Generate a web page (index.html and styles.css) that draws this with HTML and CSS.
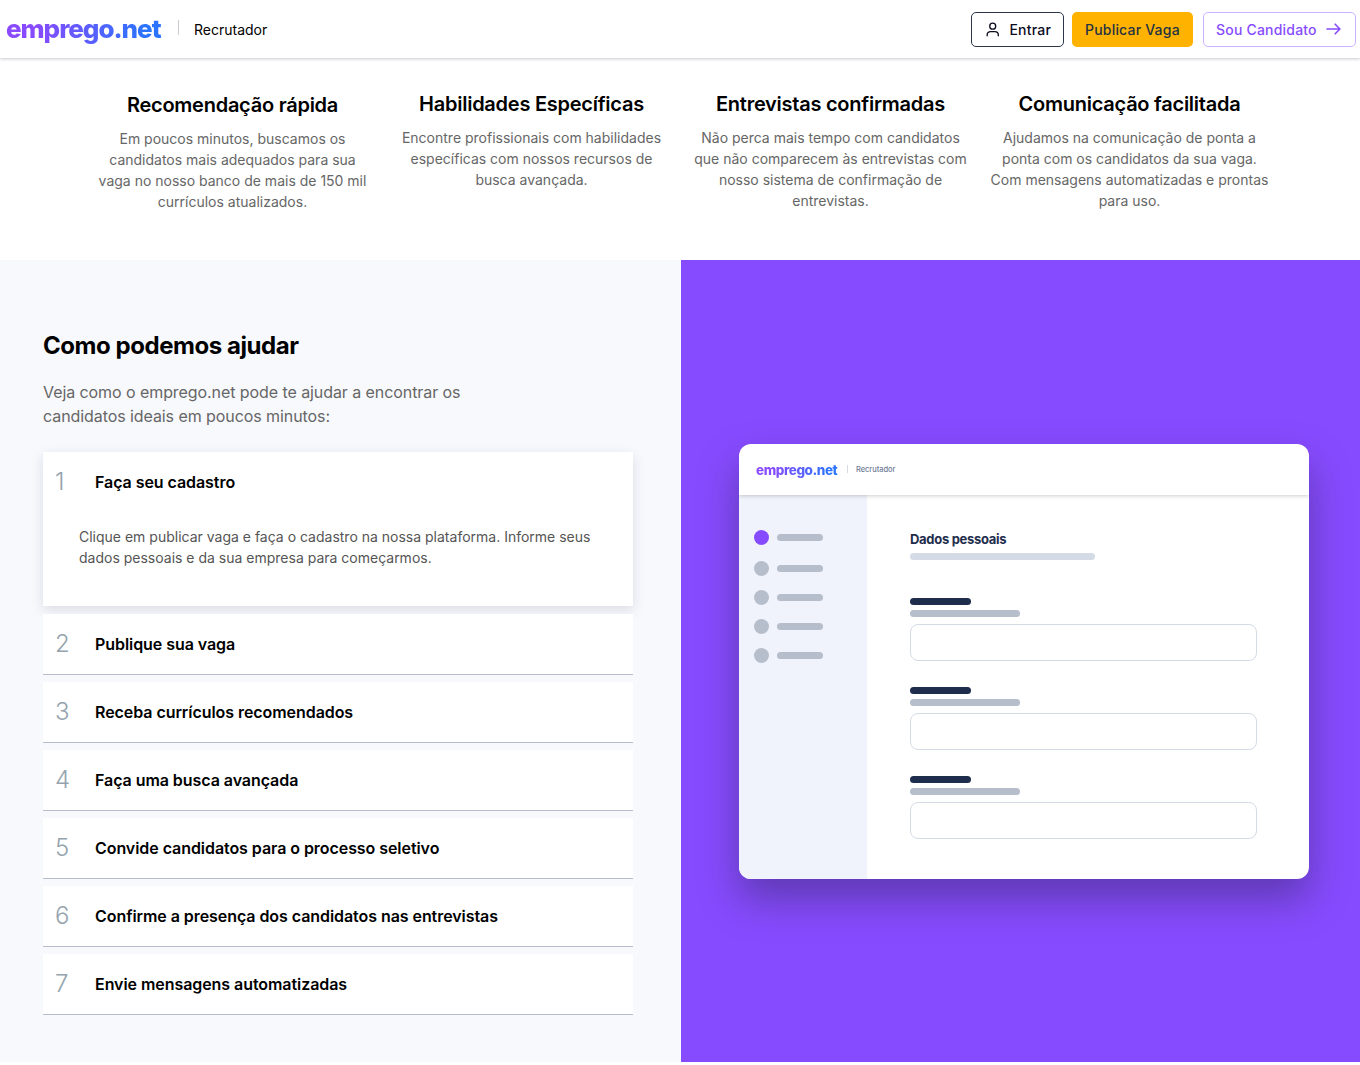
FILE: index.html
```html
<!DOCTYPE html>
<html lang="pt-BR">
<head>
    <meta charset="UTF-8">
    <meta name="viewport" content="width=device-width, initial-scale=1.0">
    <title>emprego.net | Recrutador</title>
    <link rel="stylesheet" href="styles.css">
</head>
<body>
    <header class="header">
        <div class="brand">
            <a class="logo">emprego.net</a>
            <span class="brand-divider"></span>
            <span class="brand-area">Recrutador</span>
        </div>
        <nav class="actions">
            <a class="btn btn-login">
                <svg class="icon-user" width="14" height="16" viewBox="0 0 14 16" fill="none" stroke="currentColor" stroke-width="1.4" stroke-linecap="round">
                    <circle cx="7" cy="4" r="3.1"/>
                    <path d="M1.2 14v-.7c0-2.3 1.5-3.6 3.6-3.6h4.4c2.1 0 3.6 1.3 3.6 3.6v.7"/>
                </svg>
                Entrar
            </a>
            <a class="btn btn-publish">Publicar Vaga</a>
            <a class="btn btn-candidate">
                Sou Candidato
                <svg class="icon-arrow" width="15" height="12" viewBox="0 0 15 12" fill="none" stroke="currentColor" stroke-width="1.6" stroke-linecap="round" stroke-linejoin="round">
                    <path d="M1 6h12.8M9.2 1.2L13.9 6l-4.7 4.8"/>
                </svg>
            </a>
        </nav>
    </header>

    <section class="features">
        <div class="feature feature-first">
            <h3>Recomendação rápida</h3>
            <p>Em poucos minutos, buscamos os candidatos mais adequados para sua vaga no nosso banco de mais de 150 mil currículos atualizados.</p>
        </div>
        <div class="feature">
            <h3>Habilidades Específicas</h3>
            <p>Encontre profissionais com habilidades específicas com nossos recursos de busca avançada.</p>
        </div>
        <div class="feature">
            <h3>Entrevistas confirmadas</h3>
            <p>Não perca mais tempo com candidatos que não comparecem às entrevistas com nosso sistema de confirmação de entrevistas.</p>
        </div>
        <div class="feature">
            <h3>Comunicação facilitada</h3>
            <p>Ajudamos na comunicação de ponta a ponta com os candidatos da sua vaga. Com mensagens automatizadas e prontas para uso.</p>
        </div>
    </section>

    <section class="help">
        <div class="help-left">
            <h2>Como podemos ajudar</h2>
            <p class="help-intro">Veja como o emprego.net pode te ajudar a encontrar os candidatos ideais em poucos minutos:</p>

            <div class="step step-open">
                <div class="step-head"><span class="step-number">1</span><h4>Faça seu cadastro</h4></div>
                <p class="step-text">Clique em publicar vaga e faça o cadastro na nossa plataforma. Informe seus dados pessoais e da sua empresa para começarmos.</p>
            </div>
            <div class="step">
                <div class="step-head"><span class="step-number">2</span><h4>Publique sua vaga</h4></div>
            </div>
            <div class="step">
                <div class="step-head"><span class="step-number">3</span><h4>Receba currículos recomendados</h4></div>
            </div>
            <div class="step">
                <div class="step-head"><span class="step-number">4</span><h4>Faça uma busca avançada</h4></div>
            </div>
            <div class="step">
                <div class="step-head"><span class="step-number">5</span><h4>Convide candidatos para o processo seletivo</h4></div>
            </div>
            <div class="step">
                <div class="step-head"><span class="step-number">6</span><h4>Confirme a presença dos candidatos nas entrevistas</h4></div>
            </div>
            <div class="step">
                <div class="step-head"><span class="step-number">7</span><h4>Envie mensagens automatizadas</h4></div>
            </div>
        </div>

        <div class="help-right">
            <div class="mock">
                <div class="mock-header">
                    <span class="logo logo-small">emprego.net</span>
                    <span class="mock-divider"></span>
                    <span class="mock-area">Recrutador</span>
                </div>
                <div class="mock-body">
                    <div class="mock-sidebar">
                        <div class="mock-link active"><i class="dot"></i><i class="bar"></i></div>
                        <div class="mock-link"><i class="dot"></i><i class="bar"></i></div>
                        <div class="mock-link"><i class="dot"></i><i class="bar"></i></div>
                        <div class="mock-link"><i class="dot"></i><i class="bar"></i></div>
                        <div class="mock-link"><i class="dot"></i><i class="bar"></i></div>
                    </div>
                    <div class="mock-form">
                        <div class="mock-title">Dados pessoais</div>
                        <div class="bar bar-subtitle"></div>
                        <div class="mock-field">
                            <div class="bar bar-label"></div>
                            <div class="bar bar-hint"></div>
                            <div class="mock-input"></div>
                        </div>
                        <div class="mock-field">
                            <div class="bar bar-label"></div>
                            <div class="bar bar-hint"></div>
                            <div class="mock-input"></div>
                        </div>
                        <div class="mock-field">
                            <div class="bar bar-label"></div>
                            <div class="bar bar-hint"></div>
                            <div class="mock-input"></div>
                        </div>
                    </div>
                </div>
            </div>
        </div>
    </section>
</body>
</html>
```
FILE: styles.css
```css
* {
    box-sizing: border-box;
}
body {
    font-family: Inter, Arial, sans-serif;
    margin: 0;
    padding: 0;
    background-color: #fff;
    color: #000;
}
h2, h3, h4, p {
    margin: 0;
}

/* Header */
.header {
    display: flex;
    justify-content: space-between;
    height: 58px;
    padding: 0 4px 0 6px;
    box-shadow: 0 1px 3px rgba(30, 30, 70, 0.25);
}
.brand {
    display: flex;
    align-items: center;
}
.logo {
    width: 156px;
    font-size: 26px;
    font-weight: 800;
    line-height: 32px;
    letter-spacing: -1.05px;
    color: transparent;
    background: linear-gradient(90deg, #8c4aff 0%, #864bff 20%, #2a74ff 90%);
    -webkit-background-clip: text;
    background-clip: text;
}
.brand-divider {
    width: 1px;
    height: 15px;
    margin: 0 15px 3px 16px;
    background-color: #c9ccd3;
}
.brand-area {
    font-size: 14px;
}
.actions {
    display: flex;
    padding-top: 12px;
}
.btn {
    display: flex;
    align-items: center;
    height: 35px;
    padding: 0 12px;
    border: 1px solid transparent;
    border-radius: 5px;
    font-size: 14px;
    font-weight: 500;
    letter-spacing: 0.2px;
}
.btn-login {
    width: 93px;
    padding-left: 14px;
    margin-right: 8px;
    border-color: #2b3648;
    color: #0b0b1e;
}
.icon-user {
    margin-right: 10px;
}
.btn-publish {
    width: 121px;
    margin-right: 10px;
    background-color: #ffb200;
    color: #253244;
}
.btn-candidate {
    width: 153px;
    border-color: #cdb3ff;
    color: #874bff;
}
.icon-arrow {
    margin: -2px 0 0 9px;
}

/* Features */
.features {
    display: grid;
    grid-template-columns: repeat(4, 299px);
    height: 202px;
    padding: 34px 0 0 83px;
}
.feature {
    padding: 0 9px;
    text-align: center;
}
.feature-first {
    padding-top: 1px;
}
.feature h3 {
    margin-bottom: 11px;
    font-size: 20px;
    font-weight: 600;
    line-height: 24px;
    letter-spacing: -0.25px;
}
.feature p {
    font-size: 14px;
    line-height: 21px;
    color: #666;
}

/* Help */
.help {
    display: flex;
    height: 802px;
}
.help-left {
    width: 681px;
    padding: 71px 48px 0 43px;
    background-color: #f8f9fd;
}
.help-left h2 {
    font-size: 24px;
    font-weight: 700;
    line-height: 30px;
    letter-spacing: -0.45px;
}
.help-intro {
    width: 440px;
    margin: 19px 0 24px;
    font-size: 16px;
    line-height: 24px;
    letter-spacing: -0.075px;
    color: #666;
}
.step {
    height: 61px;
    margin-bottom: 7px;
    background-color: #fff;
    border-bottom: 1px solid #b6becd;
}
.step-open {
    height: 154px;
    margin-bottom: 8px;
    border-bottom: none;
    box-shadow: 0 4px 12px rgba(30, 30, 60, 0.13);
}
.step:not(.step-open) {
    position: relative;
}
.step-head {
    display: flex;
    align-items: center;
    height: 60px;
    padding-left: 12px;
}
.step-number {
    width: 40px;
    padding-bottom: 2px;
    font-size: 24px;
    font-weight: 300;
    color: #94a3ad;
}
.step h4 {
    font-size: 16px;
    font-weight: 600;
    letter-spacing: -0.06px;
}
.step-text {
    padding: 14px 36px 0;
    font-size: 14px;
    line-height: 21px;
    color: #555;
}
.help-right {
    display: flex;
    flex: 1;
    padding: 184px 0 0 58px;
    background-color: #874bff;
}

/* Form preview */
.mock {
    width: 570px;
    height: 435px;
    border-radius: 12px;
    background-color: #fff;
    overflow: hidden;
    box-shadow: 0 20px 40px rgba(30, 30, 50, 0.38);
}
.mock-header {
    position: relative;
    display: flex;
    align-items: center;
    height: 51px;
    padding-left: 17px;
    box-shadow: 0 1px 4px rgba(0, 0, 0, 0.2);
}
.logo-small {
    width: 83px;
    font-size: 13.5px;
    line-height: 18px;
    letter-spacing: -0.45px;
}
.mock-divider {
    width: 1px;
    height: 8px;
    margin: 0 8px 2px;
    background-color: #d5dae4;
}
.mock-area {
    padding-bottom: 1px;
    font-size: 7.5px;
    font-weight: 500;
    letter-spacing: -0.05px;
    color: #6f7c94;
}
.mock-body {
    display: flex;
    height: 384px;
}
.mock-sidebar {
    width: 128px;
    padding: 35px 0 0 15px;
    background-color: #f0f3fb;
}
.mock-link {
    display: flex;
    align-items: center;
    gap: 8px;
    margin-bottom: 14px;
}
.mock-link.active {
    margin-bottom: 16px;
}
.dot {
    width: 15px;
    height: 15px;
    border-radius: 50%;
    background-color: #b6becc;
}
.mock-link.active .dot {
    background-color: #874bff;
}
.bar {
    width: 46px;
    height: 7px;
    border-radius: 4px;
    background-color: #b6becc;
}
.mock-form {
    padding: 36px 0 0 43px;
}
.mock-title {
    margin-bottom: 6px;
    font-size: 13px;
    font-weight: 700;
    line-height: 16px;
    letter-spacing: -0.3px;
    color: #1f2d4d;
}
.bar-subtitle {
    width: 185px;
    margin-bottom: 38px;
    background-color: #d5dbe6;
}
.mock-field {
    margin-bottom: 26px;
}
.bar-label {
    width: 61px;
    margin-bottom: 5px;
    background-color: #1f2d4d;
}
.bar-hint {
    width: 110px;
    margin-bottom: 7px;
}
.mock-input {
    width: 347px;
    height: 37px;
    border: 1px solid #d5dbe6;
    border-radius: 8px;
}
```
